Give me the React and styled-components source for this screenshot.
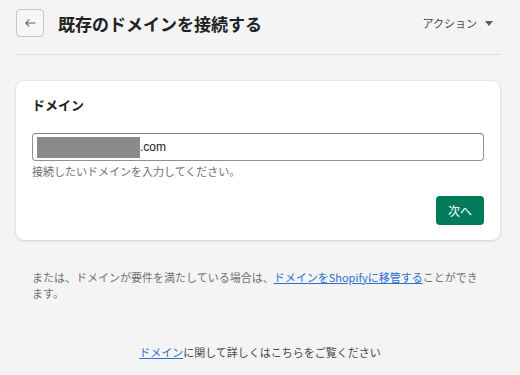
import React from 'react';
import styled, { createGlobalStyle } from 'styled-components';

const GlobalStyle = createGlobalStyle`
  html, body {
    margin: 0;
    padding: 0;
    background: #f4f4f4;
  }
  body {
    font-family: "Noto Sans CJK JP", "Liberation Sans", sans-serif;
    color: #202223;
  }
`;

const Page = styled.div`
  width: 520px;
  height: 375px;
  box-sizing: border-box;
  padding: 0 16px;
  overflow: hidden;
`;

const Header = styled.header`
  display: flex;
  align-items: center;
  height: 55px;
  padding-bottom: 8px;
  box-sizing: border-box;
  border-bottom: 1px solid #dcdcdc;
  margin-right: 4px;
`;

const BackButton = styled.button`
  width: 28px;
  height: 28px;
  box-sizing: border-box;
  border: 1px solid #c4c6c8;
  border-radius: 4px;
  background: #f6f6f7;
  display: flex;
  align-items: center;
  justify-content: center;
  padding: 0;
  margin-right: 14px;
  color: #5c5f62;
`;

const Title = styled.h1`
  margin: 0;
  font-size: 17px;
  font-weight: 700;
  color: #202223;
  flex: 1;
`;

const Actions = styled.div`
  display: flex;
  align-items: center;
  gap: 8px;
  font-size: 11px;
  color: #44474a;
  margin-right: 7px;
`;

const Card = styled.section`
  margin-top: 26px;
  margin-right: 4px;
  background: #fff;
  border-radius: 8px;
  box-shadow: 0 0 0 1px rgba(63, 63, 68, 0.05), 0 1px 3px rgba(63, 63, 68, 0.15);
  padding: 16px 16px 15px;
`;

const CardTitle = styled.h2`
  margin: 0 0 20px;
  font-size: 13px;
  font-weight: 700;
  line-height: 16px;
`;

const Input = styled.div`
  height: 28px;
  box-sizing: border-box;
  border: 1px solid #8c9196;
  border-top-color: #7d8186;
  border-radius: 4px;
  display: flex;
  align-items: center;
  padding-left: 4px;
  font-family: "Liberation Sans", "Noto Sans CJK JP", sans-serif;
  font-size: 12px;
  color: #202223;
`;

const Redacted = styled.span`
  display: inline-block;
  width: 103px;
  height: 21px;
  background: #8a8a8a;
`;

const Help = styled.p`
  margin: 2px 0 0;
  font-size: 11px;
  color: #6d7175;
  line-height: 16px;
`;

const Footer = styled.div`
  display: flex;
  justify-content: flex-end;
  margin-top: 17px;
`;

const PrimaryButton = styled.button`
  width: 48px;
  height: 29px;
  border: none;
  border-radius: 4px;
  background: #007a5a;
  color: #fff;
  font-family: inherit;
  font-size: 12px;
  padding: 0;
`;

const Note = styled.p`
  margin: 29px 16px 0;
  font-size: 11px;
  line-height: 16px;
  color: #6d7175;
`;

const Link = styled.a`
  color: #2c6ecb;
  text-decoration: underline;
`;

const Bottom = styled.p`
  margin: 43px 0 0;
  text-align: center;
  font-size: 11px;
  line-height: 16px;
  color: #44474a;
`;

const ArrowLeft = () => (
  <svg width="14" height="14" viewBox="0 0 20 20" fill="currentColor">
    <path d="M17 9.25H5.8l3.2-3.2a.75.75 0 0 0-1.06-1.06l-4.5 4.5a.75.75 0 0 0 0 1.06l4.5 4.5A.75.75 0 0 0 9 13.99l-3.2-3.24H17a.75.75 0 0 0 0-1.5z" />
  </svg>
);

const Caret = () => (
  <svg width="8" height="5" viewBox="0 0 8 5" fill="#5c5f62">
    <path d="M0 0h8L4 5z" />
  </svg>
);

const App = () => (
  <Page>
    <GlobalStyle />
    <Header>
      <BackButton aria-label="戻る">
        <ArrowLeft />
      </BackButton>
      <Title>既存のドメインを接続する</Title>
      <Actions>
        アクション
        <Caret />
      </Actions>
    </Header>
    <Card>
      <CardTitle>ドメイン</CardTitle>
      <Input>
        <Redacted />
        .com
      </Input>
      <Help>接続したいドメインを入力してください。</Help>
      <Footer>
        <PrimaryButton>次へ</PrimaryButton>
      </Footer>
    </Card>
    <Note>
      または、ドメインが要件を満たしている場合は、
      <Link href="#">ドメインをShopifyに移管する</Link>
      ことができます。
    </Note>
    <Bottom>
      <Link href="#">ドメイン</Link>に関して詳しくはこちらをご覧ください
    </Bottom>
  </Page>
);

export default App;
